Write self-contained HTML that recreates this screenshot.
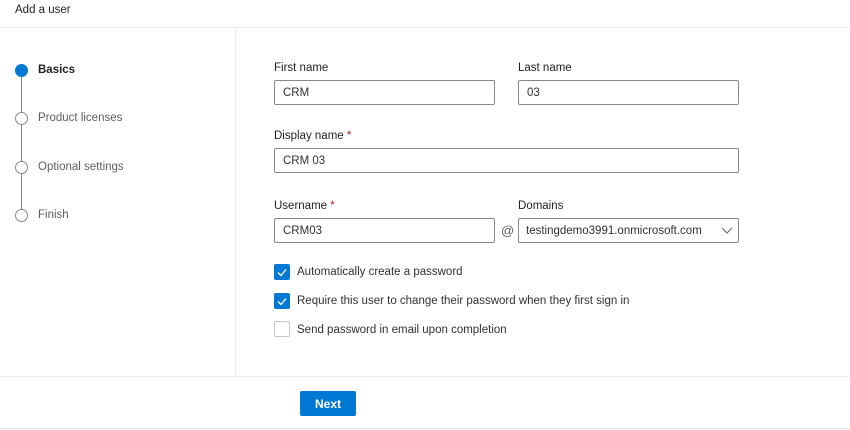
<!DOCTYPE html>
<html><head><style>
*{box-sizing:border-box;margin:0;padding:0}
body{width:850px;height:430px;background:#fff;font-family:"Liberation Sans",sans-serif;color:#323130;position:relative;overflow:hidden;font-size:11.5px}
.a{position:absolute}
.lbl{position:absolute;font-size:11.5px;color:#201f1e}
.lbl b{color:#a4262c;font-weight:normal}
.inp{position:absolute;height:25px;border:1px solid #8a8886;border-radius:2px;padding:0 8px;line-height:25px;font-size:11.5px;color:#323130}
.dot{position:absolute;left:15px;width:13px;height:13px;border-radius:50%;border:1.5px solid #8a8886;background:#fff}
.st{position:absolute;left:38px;font-size:11.5px;color:#605e5c}
.cb{position:absolute;left:274px;width:16px;height:16px;border-radius:2px}
.cb.on{background:#0078d4}
.cb.off{border:1px solid #c8c6c4}
.ct{position:absolute;left:297px;font-size:11.5px;color:#323130}
</style></head><body>
<div class="a" style="left:15px;top:4px;font-size:11.5px;color:#201f1e">Add a user</div>
<div class="a" style="left:0;top:27px;width:850px;height:1px;background:#edebe9"></div>
<div class="a" style="left:235px;top:28px;width:1px;height:348px;background:#edebe9"></div>
<div class="a" style="left:0;top:376px;width:850px;height:1px;background:#edebe9"></div>
<div class="a" style="left:0;top:428px;width:850px;height:1px;background:#edebe9"></div>

<div class="a" style="left:21px;top:76px;width:1px;height:140px;background:#8a8886"></div>
<div class="dot" style="top:64px;background:#0078d4;border-color:#0078d4"></div>
<div class="dot" style="top:112px"></div>
<div class="dot" style="top:161px"></div>
<div class="dot" style="top:209px"></div>
<div class="st" style="top:64px;color:#201f1e;font-weight:bold">Basics</div>
<div class="st" style="top:112px">Product licenses</div>
<div class="st" style="top:161px">Optional settings</div>
<div class="st" style="top:209px">Finish</div>

<div class="lbl" style="left:274px;top:62px">First name</div>
<div class="lbl" style="left:518px;top:62px">Last name</div>
<div class="inp" style="left:274px;top:80px;width:221px">CRM</div>
<div class="inp" style="left:518px;top:80px;width:221px">03</div>
<div class="lbl" style="left:274px;top:130px">Display name <b>*</b></div>
<div class="inp" style="left:274px;top:148px;width:465px">CRM 03</div>
<div class="lbl" style="left:274px;top:200px">Username <b>*</b></div>
<div class="lbl" style="left:518px;top:200px">Domains</div>
<div class="inp" style="left:274px;top:218px;width:221px">CRM03</div>
<div class="a" style="left:501px;top:223px;font-size:13px;color:#605e5c">@</div>
<div class="inp" style="left:518px;top:218px;width:221px;padding-left:7px">testingdemo3991.onmicrosoft.com</div>
<svg class="a" style="left:721px;top:225px" width="12" height="10"><path d="M1 3l5 5 5-5" fill="none" stroke="#605e5c" stroke-width="1"/></svg>

<div class="cb on" style="top:264px"></div>
<svg class="a" style="left:274px;top:264px" width="16" height="16"><path d="M4 8.5l3 3 5-6" fill="none" stroke="#fff" stroke-width="1.3"/></svg>
<div class="ct" style="top:266px">Automatically create a password</div>
<div class="cb on" style="top:293px"></div>
<svg class="a" style="left:274px;top:293px" width="16" height="16"><path d="M4 8.5l3 3 5-6" fill="none" stroke="#fff" stroke-width="1.3"/></svg>
<div class="ct" style="top:295px">Require this user to change their password when they first sign in</div>
<div class="cb off" style="top:321px"></div>
<div class="ct" style="top:324px">Send password in email upon completion</div>

<div class="a" style="left:300px;top:391px;width:56px;height:25px;background:#0078d4;border-radius:2px;color:#fff;font-weight:bold;font-size:12px;text-align:center;line-height:26px">Next</div>
</body></html>
